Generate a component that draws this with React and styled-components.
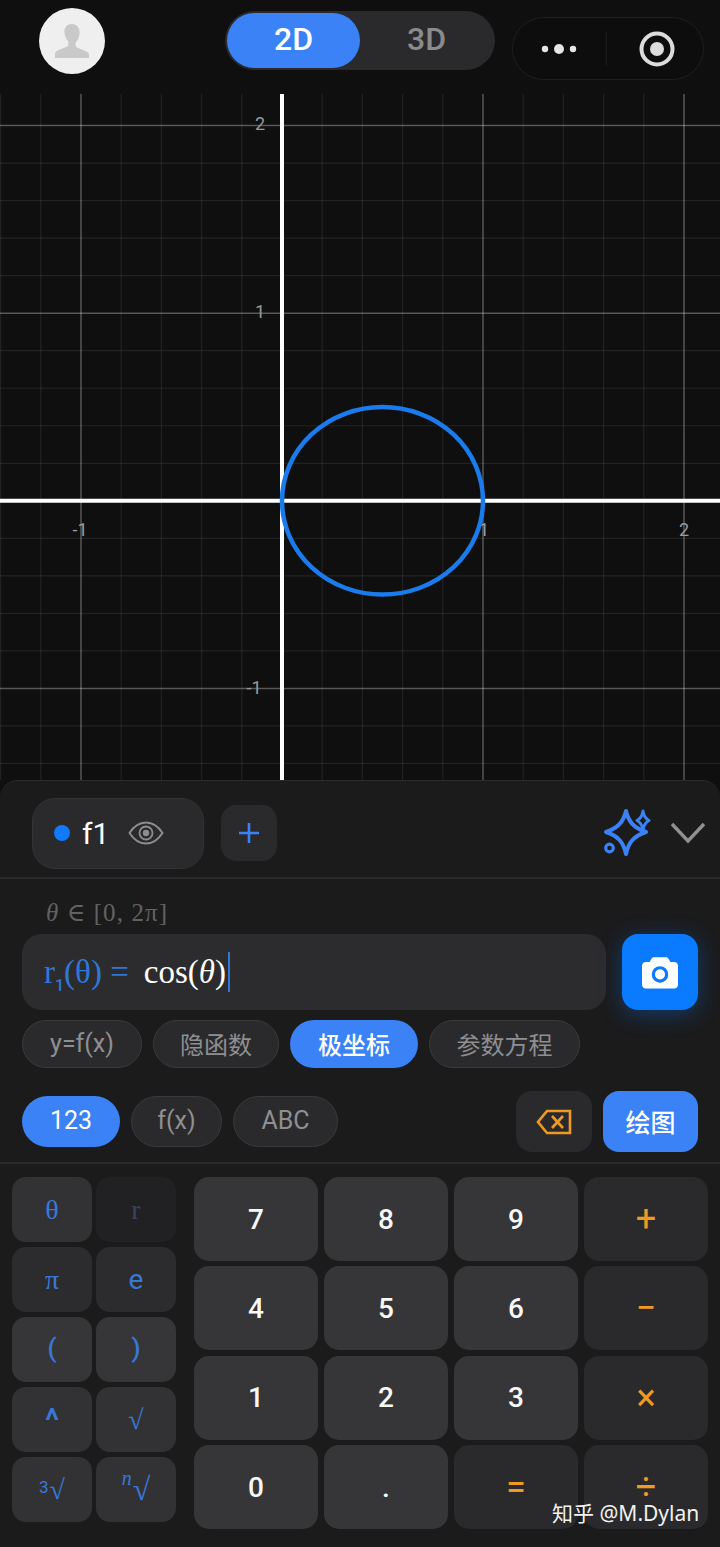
import React from "react";
import styled, { createGlobalStyle } from "styled-components";

const UI_FONT = '"Roboto", "Noto Sans CJK SC", sans-serif';
const MATH_FONT = '"Liberation Serif", "DejaVu Serif", serif';
const BLUE = "#3b82f6";
const ORANGE = "#f09a23";

const GlobalStyle = createGlobalStyle`
  html, body {
    margin: 0;
    padding: 0;
    background: #0f0f10;
  }
  * {
    box-sizing: border-box;
  }
`;

const Page = styled.div`
  position: relative;
  width: 720px;
  height: 1547px;
  overflow: hidden;
  background: #0f0f10;
  font-family: ${UI_FONT};
`;

const TopBar = styled.header`
  display: flex;
  align-items: flex-start;
  height: 94px;
  padding: 8px 16px 0 39px;
`;

const Avatar = styled.div`
  display: flex;
  align-items: center;
  justify-content: center;
  width: 66px;
  height: 66px;
  border-radius: 50%;
  background: #efefef;
`;

const ModeToggle = styled.div`
  display: flex;
  align-items: center;
  width: 270px;
  height: 59px;
  margin: 3px 0 0 120px;
  padding: 0 2px;
  border-radius: 30px;
  background: #2a2a2c;
`;

const ModeOption = styled.div`
  display: flex;
  align-items: center;
  justify-content: center;
  width: 133px;
  height: 55px;
  padding-bottom: 3px;
  border-radius: 28px;
  font-size: 32px;
  font-weight: 500;
  background: ${(p) => (p.$active ? BLUE : "transparent")};
  color: ${(p) => (p.$active ? "#fff" : "#8b8b8d")};
`;

const Capsule = styled.div`
  display: flex;
  align-items: center;
  width: 192px;
  height: 63px;
  margin: 9px 0 0 17px;
  border: 1px solid #1f1f21;
  border-radius: 32px;
  background: #0d0d0e;
`;

const CapsulePart = styled.div`
  display: flex;
  flex: 1;
  align-items: center;
  justify-content: center;
  height: 34px;
  & + & {
    padding-left: 4px;
    border-left: 1px solid #1c1c1e;
  }
`;

const Graph = styled.svg`
  display: block;
  width: 720px;
  height: 686px;
`;

const Panel = styled.section`
  height: 767px;
  border-top: 1px solid #2b2b2d;
  border-radius: 18px 18px 0 0;
  background: #1b1b1c;
`;

const FunctionBar = styled.div`
  display: flex;
  align-items: center;
  height: 98px;
  padding: 17px 14px 9px 32px;
  border-bottom: 2px solid #2a2a2c;
`;

const FunctionChip = styled.div`
  display: flex;
  align-items: center;
  width: 172px;
  height: 71px;
  padding-left: 21px;
  border: 1px solid #333335;
  border-radius: 23px;
  background: #2a2a2c;
`;

const Dot = styled.span`
  width: 16px;
  height: 16px;
  border-radius: 50%;
  background: #0f7bfa;
`;

const ChipLabel = styled.span`
  margin: 0 19px 0 12px;
  color: #fff;
  font-size: 30px;
  font-weight: 400;
`;

const AddButton = styled.div`
  display: flex;
  align-items: center;
  justify-content: center;
  width: 56px;
  height: 56px;
  margin-left: 17px;
  border-radius: 15px;
  background: #2a2a2c;
`;

const BarActions = styled.div`
  display: flex;
  align-items: center;
  gap: 18px;
  margin-left: auto;
`;

const Domain = styled.div`
  display: flex;
  align-items: flex-end;
  height: 55px;
  padding: 0 0 7px 46px;
  color: #626264;
  font-family: ${MATH_FONT};
  font-size: 25px;
  letter-spacing: 1.1px;
  white-space: pre;
`;

const InputRow = styled.div`
  display: flex;
  gap: 16px;
  padding: 0 22px;
`;

const ExpressionField = styled.div`
  display: flex;
  align-items: center;
  flex: 1;
  height: 76px;
  padding-left: 22px;
  border-radius: 20px;
  background: #2c2c2e;
  font-family: ${MATH_FONT};
  font-size: 33px;
`;

const ExpressionName = styled.span`
  margin-right: 15px;
  color: #2f78d8;
  white-space: pre;
  sub {
    font-family: ${UI_FONT};
    font-size: 16px;
    font-weight: 500;
    line-height: 0;
  }
`;

const ExpressionBody = styled.span`
  color: #fff;
`;

const Caret = styled.span`
  width: 2px;
  height: 40px;
  margin-left: 2px;
  background: #2f78d8;
`;

const CameraButton = styled.div`
  display: flex;
  align-items: center;
  justify-content: center;
  width: 76px;
  height: 76px;
  border-radius: 16px;
  background: #0a7bff;
  box-shadow: 0 4px 22px rgba(10, 123, 255, 0.35);
`;

const ChipRow = styled.div`
  display: flex;
  gap: 11px;
  margin-top: 10px;
  padding: 0 22px;
`;

const Pill = styled.div`
  display: flex;
  align-items: center;
  justify-content: center;
  width: ${(p) => p.$w}px;
  height: ${(p) => p.$h}px;
  padding-bottom: 2px;
  border: ${(p) => (p.$active ? "none" : "1px solid #3a3a3c")};
  border-radius: ${(p) => p.$h / 2}px;
  background: ${(p) => (p.$active ? BLUE : "#2a2a2c")};
  color: ${(p) => (p.$active ? "#fff" : "#8f8f91")};
  font-size: ${(p) => p.$size || 25}px;
  font-weight: ${(p) => (p.$active && p.$size ? 500 : 400)};
`;

const KeyboardBar = styled.div`
  display: flex;
  align-items: center;
  height: 72px;
  margin-top: 24px;
  padding: 0 22px 11px;
  border-bottom: 2px solid #2a2a2c;
`;

const KeyboardTabs = styled.div`
  display: flex;
  gap: 11px;
`;

const BarButtons = styled.div`
  display: flex;
  gap: 11px;
  margin-left: auto;
`;

const BackspaceButton = styled.div`
  display: flex;
  align-items: center;
  justify-content: center;
  width: 76px;
  height: 61px;
  border-radius: 16px;
  background: #2a2a2c;
`;

const DrawButton = styled.div`
  display: flex;
  align-items: center;
  justify-content: center;
  width: 95px;
  height: 61px;
  padding-bottom: 2px;
  border-radius: 16px;
  background: ${BLUE};
  color: #fff;
  font-size: 25px;
  font-weight: 500;
`;

const Keypad = styled.div`
  display: flex;
  gap: 18px;
  padding: 13px 0 0 12px;
`;

const SymbolKeys = styled.div`
  display: grid;
  grid-template-columns: repeat(2, 80px);
  grid-auto-rows: 65px;
  gap: 5px 4px;
`;

const SymbolKey = styled.div`
  display: flex;
  align-items: center;
  justify-content: center;
  padding-bottom: ${(p) => p.$lift || 0}px;
  border-radius: 14px;
  background: ${(p) => (p.$dim ? "#212123" : p.$shade || "#323234")};
  color: ${(p) => (p.$dim ? "#39445a" : "#3a78d8")};
  font-family: ${(p) => (p.$serif ? MATH_FONT : UI_FONT)};
  font-size: ${(p) => p.$size || 28}px;
  font-weight: ${(p) => (p.$bold ? 500 : 400)};
`;

const RootIndex = styled.span`
  position: relative;
  top: ${(p) => p.$top}px;
  margin-right: 1px;
  font-family: ${(p) => (p.$italic ? MATH_FONT : UI_FONT)};
  font-size: ${(p) => (p.$italic ? 20 : 17)}px;
  font-style: ${(p) => (p.$italic ? "italic" : "normal")};
`;

const NumberKeys = styled.div`
  display: grid;
  grid-template-columns: repeat(4, 124px);
  grid-auto-rows: 84px;
  gap: 5.4px 6px;
`;

const NumberKey = styled.div`
  display: flex;
  align-items: center;
  justify-content: center;
  border-radius: 15px;
  background: ${(p) => (p.$op ? "#2a2a2c" : "#363638")};
  color: ${(p) => (p.$op ? ORANGE : "#f8f8f8")};
  font-size: ${(p) => (p.$op ? 36 : 28)}px;
  font-weight: ${(p) => (p.$op ? 400 : 500)};
`;

const Watermark = styled.div`
  position: absolute;
  left: 552px;
  top: 1497px;
  color: #f2f2f2;
  font-family: "Noto Sans", "Noto Sans CJK SC", sans-serif;
  font-size: 21px;
  line-height: 32px;
  white-space: nowrap;
`;

// graph scale taken from the axis ticks
const ORIGIN_X = 282;
const ORIGIN_Y = 406.8; // y=500.8 on the page, graph starts at 94
const UNIT_X = 201;
const UNIT_Y = 187.6;
const GRAPH_W = 720;
const GRAPH_H = 686;

function gridLines() {
  const lines = [];
  for (let i = -10; i <= 15; i++) {
    if (i === 0) continue;
    const x = ORIGIN_X + (i * UNIT_X) / 5;
    const major = i % 5 === 0;
    if (x >= 0 && x <= GRAPH_W) {
      lines.push(
        <line key={"v" + i} x1={x} x2={x} y1={0} y2={GRAPH_H}
          stroke="#fff" strokeOpacity={major ? 0.3 : 0.08} strokeWidth={major ? 1.5 : 1.2} />
      );
    }
    const y = ORIGIN_Y + (i * UNIT_Y) / 5;
    if (y >= 0 && y <= GRAPH_H) {
      lines.push(
        <line key={"h" + i} y1={y} y2={y} x1={0} x2={GRAPH_W}
          stroke="#fff" strokeOpacity={major ? 0.3 : 0.08} strokeWidth={major ? 1.5 : 1.2} />
      );
    }
  }
  return lines;
}

const TICKS = [
  ["2", 260, 36],
  ["1", 260, 224],
  ["-1", 254, 600],
  ["-1", 80, 442],
  ["1", 484, 442],
  ["2", 684, 442],
];

function PolarGraph() {
  return (
    <Graph viewBox="0 0 720 686">
      {gridLines()}
      <line x1={ORIGIN_X} x2={ORIGIN_X} y1={0} y2={GRAPH_H} stroke="#fff" strokeWidth={4} />
      <line x1={0} x2={GRAPH_W} y1={ORIGIN_Y} y2={ORIGIN_Y} stroke="#fff" strokeWidth={4} />
      {TICKS.map(([label, x, y]) => (
        <text key={label + x + y} x={x} y={y} textAnchor="middle" fill="#9a9a9c"
          fontFamily="Roboto, sans-serif" fontSize="18">
          {label}
        </text>
      ))}
      <ellipse cx={382.5} cy={ORIGIN_Y} rx={100.5} ry={93.8} fill="none" stroke="#1a7bec" strokeWidth={4.5} />
    </Graph>
  );
}

function PersonIcon() {
  return (
    <svg width="36" height="34" viewBox="0 0 36 34" fill="#c9c9c9">
      <path d="M18 0c5 0 7.600 3.600 7.600 8.600 0 4.200-1.800 8-4 10.200v2.400c0 1.600 1.200 2.400 3 3.100l6.600 2.600c2.600 1 3.800 2.400 3.800 4.400V34H1v-3.700c0-2 1.200-3.400 3.800-4.400l6.600-2.600c1.800-.7 3-1.500 3-3.100v-2.400c-2.200-2.200-4-6-4-10.200C10.400 3.600 13 0 18 0z" />
    </svg>
  );
}

function MoreIcon() {
  return (
    <svg width="40" height="14" viewBox="0 0 40 14" fill="#e6e6e6">
      <circle cx="6" cy="7" r="3.200" />
      <circle cx="20" cy="7" r="5" />
      <circle cx="34" cy="7" r="3.200" />
    </svg>
  );
}

function TargetIcon() {
  return (
    <svg width="38" height="38" viewBox="0 0 38 38">
      <circle cx="19" cy="19" r="15.500" fill="none" stroke="#dcdcdc" strokeWidth="4" />
      <circle cx="19" cy="19" r="7" fill="#dcdcdc" />
    </svg>
  );
}

function EyeIcon() {
  return (
    <svg width="36" height="24" viewBox="0 0 36 24">
      <path d="M1.500 12C6 5 11.500 1.500 18 1.500S30 5 34.500 12C30 19 24.500 22.500 18 22.500S6 19 1.500 12z"
        fill="none" stroke="#8d8d8f" strokeWidth="2" />
      <circle cx="18" cy="12" r="6.500" fill="none" stroke="#8d8d8f" strokeWidth="1.800" />
      <circle cx="18" cy="12" r="3.200" fill="#8d8d8f" />
    </svg>
  );
}

function PlusIcon() {
  return (
    <svg width="22" height="22" viewBox="0 0 22 22" stroke={BLUE} strokeWidth="2.600">
      <path d="M11 1v20M1 11h20" />
    </svg>
  );
}

function SparkleIcon() {
  return (
    <svg width="50" height="50" viewBox="0 0 50 50" fill="none" stroke={BLUE} strokeWidth="4" strokeLinejoin="round">
      <path d="M24 3c2.600 11 8 17 20 21-12 4-17.400 10-20 22-2.600-12-8-18-20-22 12-4 17.400-10 20-21z" />
      <path d="M41 3c.8 5 2 7.500 6 9.500-4 2-5.200 4.500-6 9.500-.8-5-2-7.500-6-9.500 4-2 5.200-4.500 6-9.500z" fill="#1b1b1c" strokeWidth="3" />
      <circle cx="7.500" cy="40" r="3.800" strokeWidth="3.200" />
    </svg>
  );
}

function ChevronIcon() {
  return (
    <svg width="36" height="22" viewBox="0 0 36 22" fill="none" stroke="#909092" strokeWidth="3.400">
      <path d="M2 2l16 17L34 2" />
    </svg>
  );
}

function CameraIcon() {
  return (
    <svg width="36" height="33" viewBox="0 0 38 34">
      <path fill="#fff" d="M12.500 1h13c1.200 0 2 .6 2.500 1.600L30 6h4c2.200 0 4 1.800 4 4v20c0 2.200-1.800 4-4 4H4c-2.200 0-4-1.800-4-4V10c0-2.200 1.800-4 4-4h4l2-3.400C10.500 1.600 11.300 1 12.500 1z" />
      <circle cx="19" cy="19" r="7" fill="none" stroke="#0a7bff" strokeWidth="3.400" />
    </svg>
  );
}

function BackspaceIcon() {
  return (
    <svg width="36" height="26" viewBox="0 0 36 26" fill="none" stroke={ORANGE} strokeWidth="2.600">
      <path d="M11 2h23v22H11L2 13z" />
      <path d="M16 7l11 12M27 7L16 19" />
    </svg>
  );
}

const NUMBER_KEYS = [
  ["7"], ["8"], ["9"], ["+", true],
  ["4"], ["5"], ["6"], ["−", true],
  ["1"], ["2"], ["3"], ["×", true],
  ["0"], ["."], ["=", true], ["÷", true],
];

function App() {
  return (
    <Page>
      <GlobalStyle />
      <TopBar>
        <Avatar>
          <PersonIcon />
        </Avatar>
        <ModeToggle>
          <ModeOption $active>2D</ModeOption>
          <ModeOption>3D</ModeOption>
        </ModeToggle>
        <Capsule>
          <CapsulePart>
            <MoreIcon />
          </CapsulePart>
          <CapsulePart>
            <TargetIcon />
          </CapsulePart>
        </Capsule>
      </TopBar>

      <PolarGraph />

      <Panel>
        <FunctionBar>
          <FunctionChip>
            <Dot />
            <ChipLabel>f1</ChipLabel>
            <EyeIcon />
          </FunctionChip>
          <AddButton>
            <PlusIcon />
          </AddButton>
          <BarActions>
            <SparkleIcon />
            <ChevronIcon />
          </BarActions>
        </FunctionBar>

        <Domain>
          <i>θ</i> ∈ [0, 2π]
        </Domain>

        <InputRow>
          <ExpressionField>
            <ExpressionName>
              r<sub>1</sub>(θ) =
            </ExpressionName>
            <ExpressionBody>
              cos(<i>θ</i>)
            </ExpressionBody>
            <Caret />
          </ExpressionField>
          <CameraButton>
            <CameraIcon />
          </CameraButton>
        </InputRow>

        <ChipRow>
          <Pill $w={120} $h={48}>y=f(x)</Pill>
          <Pill $w={126} $h={48} $size={24}>隐函数</Pill>
          <Pill $w={128} $h={48} $size={24} $active>极坐标</Pill>
          <Pill $w={151} $h={48} $size={24}>参数方程</Pill>
        </ChipRow>

        <KeyboardBar>
          <KeyboardTabs>
            <Pill $w={98} $h={51} $active>123</Pill>
            <Pill $w={91} $h={51}>f(x)</Pill>
            <Pill $w={105} $h={51}>ABC</Pill>
          </KeyboardTabs>
          <BarButtons>
            <BackspaceButton>
              <BackspaceIcon />
            </BackspaceButton>
            <DrawButton>绘图</DrawButton>
          </BarButtons>
        </KeyboardBar>

        <Keypad>
          <SymbolKeys>
            <SymbolKey $serif>θ</SymbolKey>
            <SymbolKey $serif $dim>r</SymbolKey>
            <SymbolKey $serif $shade="#2c2c2e">π</SymbolKey>
            <SymbolKey $shade="#2c2c2e">e</SymbolKey>
            <SymbolKey $bold $size={26} $lift={4} $shade="#363638">(</SymbolKey>
            <SymbolKey $bold $size={26} $lift={4} $shade="#363638">)</SymbolKey>
            <SymbolKey $bold $size={34}>^</SymbolKey>
            <SymbolKey $serif>√</SymbolKey>
            <SymbolKey $serif>
              <RootIndex $top={-3}>3</RootIndex>√
            </SymbolKey>
            <SymbolKey $serif $size={32}>
              <RootIndex $top={-11} $italic>n</RootIndex>√
            </SymbolKey>
          </SymbolKeys>
          <NumberKeys>
            {NUMBER_KEYS.map(([label, op]) => (
              <NumberKey key={label} $op={op}>{label}</NumberKey>
            ))}
          </NumberKeys>
        </Keypad>
      </Panel>

      <Watermark>知乎 @M.Dylan</Watermark>
    </Page>
  );
}

export default App;
